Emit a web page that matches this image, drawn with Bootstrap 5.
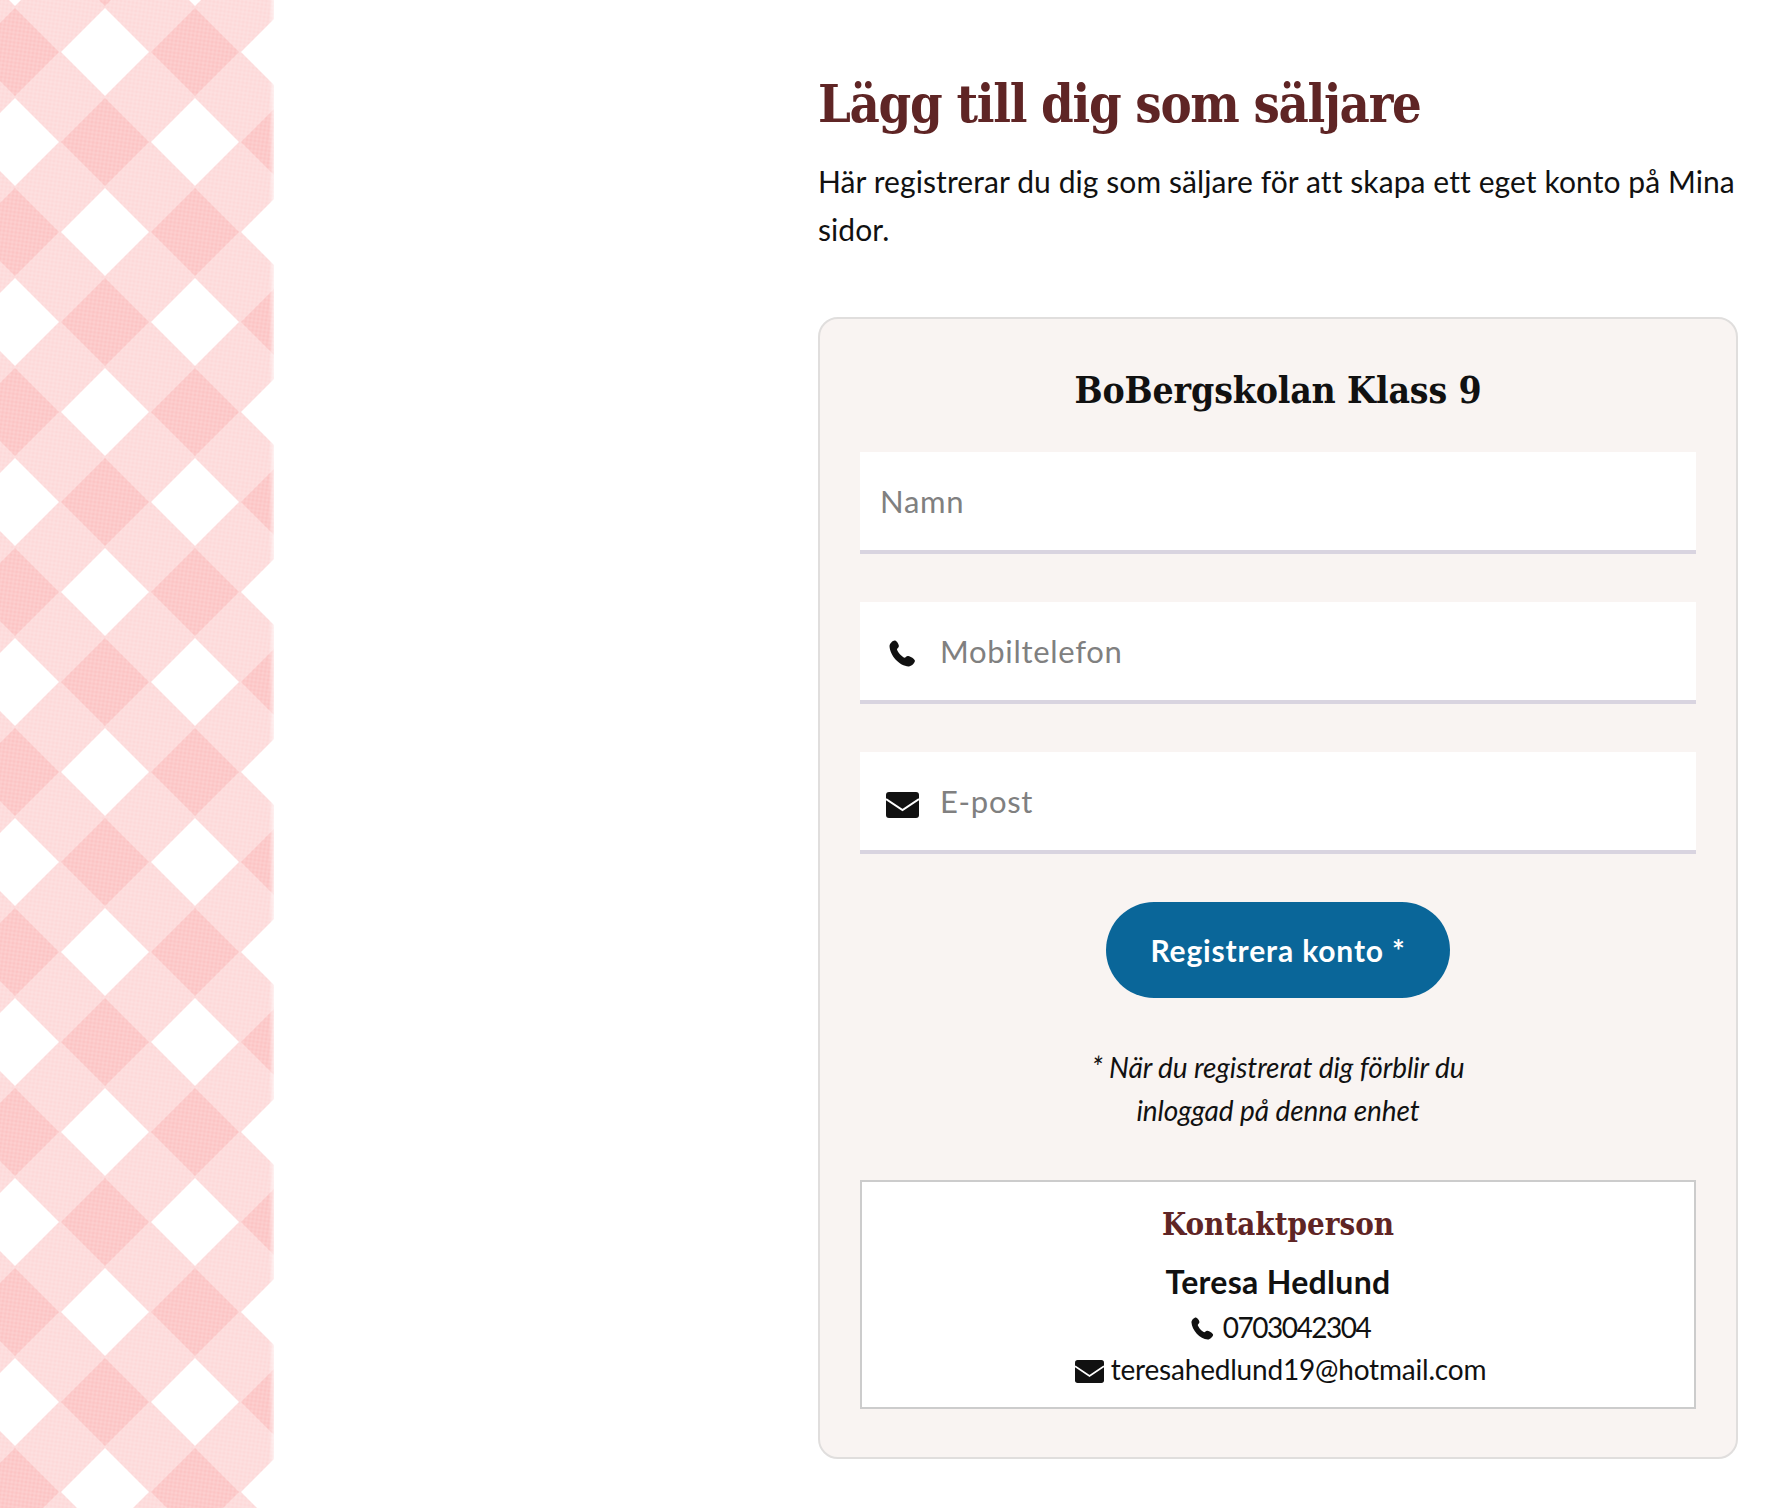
<!DOCTYPE html>
<html lang="sv">
<head>
<meta charset="utf-8">
<title>Lägg till dig som säljare</title>
<link href="https://cdn.jsdelivr.net/npm/bootstrap@5.3.0/dist/css/bootstrap.min.css" rel="stylesheet">
<style>
:root{--sellerbrown:#5f2525;--sellerink:#111;}
html,body{height:100%;}
body{margin:0;background:#fff;color:var(--sellerink);font-family:Lato,"Open Sans",sans-serif;overflow:hidden;}
.shell{height:1508px;}
.gingham{flex:0 0 274px;width:274px;height:1508px;display:block;}
.main-col{flex:1 1 auto;padding:71px 30px 0 544px;}
.page-title{font-family:"DejaVu Serif Condensed","DejaVu Serif",serif;font-weight:700;font-size:52px;line-height:66px;letter-spacing:-1.3px;color:var(--sellerbrown);margin:0 0 21px;}
.page-lead{font-size:30px;line-height:47.5px;letter-spacing:.09px;margin:0 0 64px;}
.reg-panel{height:1142px;background:#f9f4f2;border:2px solid #e0dedd;border-radius:20px;padding:48px 40px 40px;}
.school{font-family:"DejaVu Serif Condensed","DejaVu Serif",serif;font-weight:700;font-size:37px;line-height:46px;letter-spacing:-.15px;text-align:center;margin:0 0 39px;}
.field{height:102px;background:#fff;border-bottom:4px solid #d9d4e0;margin-bottom:48px;display:flex;align-items:center;padding-left:20px;}
.field input{border:0;outline:0;background:transparent;flex:1;font-size:31px;letter-spacing:.7px;color:#111;padding:0;}
.field input::placeholder{color:#808080;opacity:1;}
.field-icon{width:44px;flex:none;margin-right:16px;display:flex;justify-content:center;}
.phone-slot{margin-top:4px;}
.mail-slot{margin-top:8px;}
.go-btn{background:#0a6699;border:0;border-radius:48px;height:96px;width:344px;color:#fff;font-weight:700;font-size:30px;letter-spacing:.85px;padding:0;}
.go-btn:hover{background:#0a6699;color:#fff;}
.note{font-style:italic;font-size:28px;line-height:43px;letter-spacing:-.08px;text-align:center;margin:48px 0 48px;}
.contact-box{border:2px solid #ccc;background:#fff;height:229px;text-align:center;padding-top:22px;}
.contact-title{font-family:"DejaVu Serif Condensed","DejaVu Serif",serif;font-weight:700;font-size:31px;line-height:40px;color:var(--sellerbrown);margin:0 0 15px;}
.contact-name{font-weight:700;font-size:32px;line-height:46px;letter-spacing:.3px;margin:0 0 1px;}
.contact-line{font-size:28px;line-height:42px;letter-spacing:-.2px;margin:0;padding-left:5px;}
.digits{letter-spacing:-1.5px;margin-left:2px;}
.contact-line svg{vertical-align:-3px;}
</style>
</head>
<body>
<div class="d-flex shell">
<svg class="gingham" viewBox="0 0 274 1508" aria-hidden="true">
<defs>
<pattern id="tile" patternUnits="userSpaceOnUse" width="180" height="180" x="15" y="-38">
<rect width="180" height="180" fill="#fdd9d9"/>
<polygon points="90,46 134,90 90,134 46,90" fill="#fff"/>
<polygon points="0,-44 44,0 0,44 -44,0" fill="#fff"/>
<polygon points="180,-44 224,0 180,44 136,0" fill="#fff"/>
<polygon points="0,136 44,180 0,224 -44,180" fill="#fff"/>
<polygon points="180,136 224,180 180,224 136,180" fill="#fff"/>
<polygon points="90,-44 134,0 90,44 46,0" fill="#fcc4c4"/>
<polygon points="90,136 134,180 90,224 46,180" fill="#fcc4c4"/>
<polygon points="0,46 44,90 0,134 -44,90" fill="#fcc4c4"/>
<polygon points="180,46 224,90 180,134 136,90" fill="#fcc4c4"/>
</pattern>
<pattern id="weave" patternUnits="userSpaceOnUse" width="4" height="4" patternTransform="rotate(8)">
<path d="M0 2H4M2 0V4" stroke="#fff" stroke-opacity=".2" stroke-width="1" fill="none"/>
</pattern>
<linearGradient id="fade" x1="0" x2="1" y1="0" y2="0">
<stop offset="0" stop-color="#fff" stop-opacity="0"/>
<stop offset="1" stop-color="#fff" stop-opacity=".6"/>
</linearGradient>
</defs>
<rect width="274" height="1508" fill="url(#tile)"/>
<rect width="274" height="1508" fill="url(#weave)"/>
<rect x="269" width="5" height="1508" fill="url(#fade)"/>
</svg>
<div class="main-col">
<h1 class="page-title">Lägg till dig som säljare</h1>
<p class="page-lead">Här registrerar du dig som säljare för att skapa ett eget konto på Mina sidor.</p>
<div class="reg-panel">
<h2 class="school">BoBergskolan Klass 9</h2>
<div class="field"><input type="text" placeholder="Namn"></div>
<div class="field"><span class="field-icon phone-slot"><svg width="27" height="27" viewBox="0 0 26 26"><path fill="#111" d="M5.500.5C7 .5 9 3 9.500 5.500 9.800 7 8 8 7.600 9 8.500 12 12 16 15 17.200 16 17 17 15.200 18.500 15.500 21 16 24.500 18 25 20 25 22 21.500 25.500 19 25.500 10 25 1 15 .5 6 .5 3.500 3.500.5 5.500.5Z"/></svg></span><input type="text" placeholder="Mobiltelefon"></div>
<div class="field"><span class="field-icon mail-slot"><svg width="33" height="26" viewBox="0 0 33 26"><rect width="33" height="26" rx="3" fill="#111"/><path d="M0 7 16.500 18 33 7" fill="none" stroke="#fff" stroke-width="2"/></svg></span><input type="email" placeholder="E-post"></div>
<div class="text-center"><button type="button" class="btn go-btn">Registrera konto *</button></div>
<p class="note">* När du registrerat dig förblir du<br>inloggad på denna enhet</p>
<div class="contact-box">
<h3 class="contact-title">Kontaktperson</h3>
<p class="contact-name">Teresa Hedlund</p>
<p class="contact-line"><svg width="23" height="25" viewBox="0 0 26 26"><path fill="#111" d="M5.500.5C7 .5 9 3 9.500 5.500 9.800 7 8 8 7.600 9 8.500 12 12 16 15 17.200 16 17 17 15.200 18.500 15.500 21 16 24.500 18 25 20 25 22 21.500 25.500 19 25.500 10 25 1 15 .5 6 .5 3.500 3.500.5 5.500.5Z"/></svg> <span class="digits">0703042304</span></p>
<p class="contact-line"><svg width="29" height="23" viewBox="0 0 33 26"><rect width="33" height="26" rx="3" fill="#111"/><path d="M0 7 16.500 18 33 7" fill="none" stroke="#fff" stroke-width="2"/></svg> teresahedlund19@hotmail.com</p>
</div>
</div>
</div>
</div>
<script src="https://cdn.jsdelivr.net/npm/bootstrap@5.3.0/dist/js/bootstrap.bundle.min.js"></script>
</body>
</html>
